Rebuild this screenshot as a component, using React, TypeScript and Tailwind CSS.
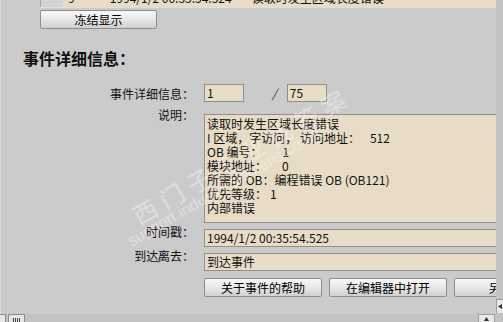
import React from "react";

function Btn({ children, className = "" }: { children: React.ReactNode; className?: string }) {
  return (
    <div
      className={`h-[19px] shrink-0 flex items-center justify-center whitespace-nowrap rounded-[2px] border border-[#8e8e8e] bg-linear-to-b from-[#f8f8f8] via-[#e8e8e8] to-[#d0d0d0] text-[12px] leading-[14px] text-black ${className}`}
    >
      {children}
    </div>
  );
}

function Label({ children, className = "" }: { children: React.ReactNode; className?: string }) {
  return (
    <div className={`w-[193px] shrink-0 text-right whitespace-nowrap text-[12px] leading-[14px] text-[#111] ${className}`}>
      {children}
    </div>
  );
}

export default function App() {
  return (
    <div className="relative w-[503px] h-[322px] overflow-hidden bg-[#cbcbcb] flex flex-col font-['Noto_Sans_CJK_SC',sans-serif] text-[12px] leading-[14px] text-[#111]">
      <div className="flex h-[314px] shrink-0">
        {/* main panel */}
        <div className="flex-1 min-w-0 overflow-hidden border-l border-[#dadada] flex flex-col">
          {/* top table row (cut off) */}
          <div className="ml-[39px] -mt-[11px] h-[19px] shrink-0 flex border-b border-[#dedede]">
            <div className="w-[23px] bg-[#d3d3d3] border-l border-[#a9a9a9]" />
            <div className="flex-1 bg-[#e8dcc6] flex items-center whitespace-nowrap">
              <span className="ml-[5px]">9</span>
              <span className="ml-[35px]">1994/1/2 00:35:54.524</span>
              <span className="ml-[20px]">读取时发生区域长度错误</span>
            </div>
          </div>

          <Btn className="ml-[39px] mt-[2px] w-[117px]">冻结显示</Btn>

          <div className="ml-[22px] mt-[19px] h-[20px] text-[16px] leading-[20px] font-bold text-[#111] whitespace-nowrap">
            事件详细信息：
          </div>

          {/* row 1 */}
          <div className="mt-[16px] flex h-[18px] shrink-0">
            <Label className="mt-[3px]">事件详细信息：</Label>
            <div className="ml-[10px] flex items-center">
              <div className="w-[40px] h-[18px] border border-[#8f8f8f] bg-[#e8dcc6] pl-[2px] leading-[16px]">1</div>
              <span className="ml-[28px] mr-[10px] italic text-[#333]">/</span>
              <div className="w-[40px] h-[18px] border border-[#8f8f8f] bg-[#e8dcc6] pl-[2px] leading-[16px]">75</div>
            </div>
          </div>

          {/* row 2 - description */}
          <div className="mt-[12px] flex h-[109px] shrink-0">
            <Label className="-mt-[6px]">说明：</Label>
            <div className="ml-[10px] flex-1 -mr-[10px] border border-[#8f8f8f] bg-[#e8dcc6] pl-[2px] pt-[2px] whitespace-nowrap leading-[14px]">
              <div>读取时发生区域长度错误</div>
              <div>
                I 区域，字访问， 访问地址：<span className="ml-[10px]">512</span>
              </div>
              <div>
                OB 编号：<span className="ml-[20px]">1</span>
              </div>
              <div>
                模块地址：<span className="ml-[15px]">0</span>
              </div>
              <div>所需的 OB：编程错误 OB (OB121)</div>
              <div>
                优先等级：<span className="ml-[3px]">1</span>
              </div>
              <div>内部错误</div>
            </div>
          </div>

          {/* row 3 - timestamp */}
          <div className="mt-[6px] flex h-[18px] shrink-0">
            <Label className="-mt-[4px]">时间戳：</Label>
            <div className="ml-[10px] flex-1 -mr-[10px] h-[18px] border border-[#8f8f8f] bg-[#e8dcc6] pl-[2px] leading-[16px] whitespace-nowrap">
              1994/1/2 00:35:54.525
            </div>
          </div>

          {/* row 4 - coming/going */}
          <div className="mt-[6px] flex h-[18px] shrink-0">
            <Label className="-mt-[4px]">
              到达<span className="-ml-[1px] -mr-[4px] text-[#3b5a8a]">/</span>离去：
            </Label>
            <div className="ml-[10px] flex-1 -mr-[10px] h-[18px] border border-[#8f8f8f] bg-[#e8dcc6] pl-[2px] leading-[16px] whitespace-nowrap">
              到达事件
            </div>
          </div>

          {/* buttons */}
          <div className="mt-[7px] ml-[203px] flex gap-[7px] shrink-0">
            <Btn className="w-[118px]">关于事件的帮助</Btn>
            <Btn className="w-[118px]">在编辑器中打开</Btn>
            <Btn className="w-[118px]">另存为 ...</Btn>
          </div>
        </div>

        {/* right scrollbar strip */}
        <div className="w-[7px] shrink-0 bg-[#c3c3c3] flex flex-col justify-end">
          <div className="mb-[1px] h-[14px] bg-[#e9e9e9] border-t border-l border-[#9c9c9c] flex items-center pl-[1px]">
            <svg width="4" height="5" viewBox="0 0 4 5">
              <path d="M0 2.5 L4 0 L4 5 Z" fill="#333" />
            </svg>
          </div>
        </div>
      </div>

      {/* bottom scrollbar strip */}
      <div className="h-[8px] shrink-0 bg-[#c3c3c3] flex items-stretch">
        <div className="w-[6px] bg-[#e6e6e6] border-t border-r border-[#8c8c8c]" />
        <div className="ml-[2px] w-[17px] bg-[#e6e6e6] border-t border-x border-[#8c8c8c] flex justify-center items-end gap-[1px]">
          <div className="w-[1px] h-[4px] bg-[#444]" />
          <div className="w-[1px] h-[4px] bg-[#444]" />
          <div className="w-[1px] h-[4px] bg-[#444]" />
          <div className="w-[1px] h-[4px] bg-[#444]" />
        </div>
        <div className="flex-1" />
        <div className="w-[17px] bg-[#e9e9e9] border-t border-x border-[#9c9c9c] flex justify-center pt-[2px]">
          <svg width="5" height="4" viewBox="0 0 5 4">
            <path d="M2.5 0 L5 4 L0 4 Z" fill="#333" />
          </svg>
        </div>
        <div className="w-[8px]" />
      </div>

      {/* watermark */}
      <div className="pointer-events-none absolute left-[142px] top-[200px] h-[30px] origin-bottom-left -rotate-[30deg] whitespace-nowrap text-[24px] leading-[30px] tracking-[7px] text-white/40">
        西门子工业找答案
      </div>
      <div className="pointer-events-none absolute left-[134px] top-[231px] h-[20px] origin-bottom-left -rotate-[30deg] whitespace-nowrap font-['Liberation_Sans',sans-serif] text-[16px] leading-[20px] text-white/40">
        support.industry.siemens.com/cs
      </div>
    </div>
  );
}
